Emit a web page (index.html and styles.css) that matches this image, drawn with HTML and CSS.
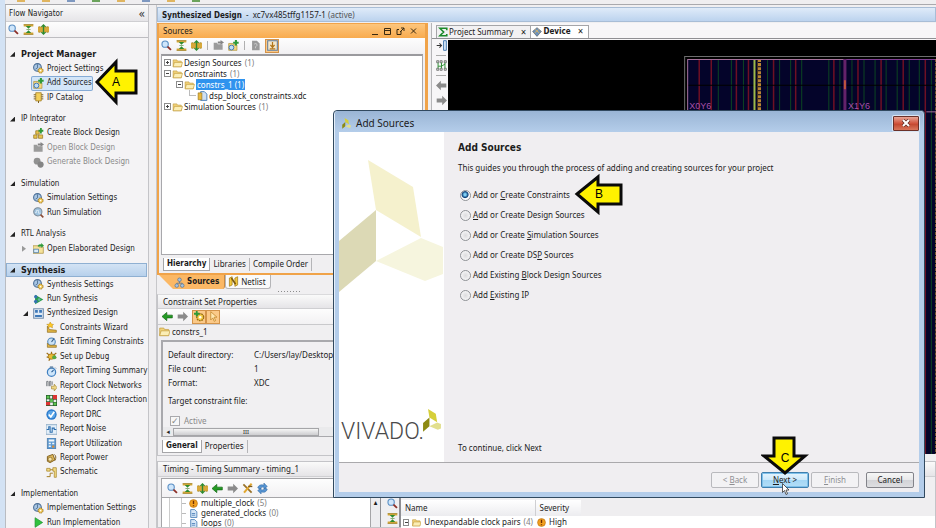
FILE: index.html
```html
<!DOCTYPE html>
<html lang="en">
<head>
<meta charset="utf-8">
<title>Vivado - Add Sources</title>
<link rel="stylesheet" href="styles.css">
</head>
<body>
<svg class="defs" aria-hidden="true">
  <symbol id="search" viewBox="0 0 16 16"><circle cx="6" cy="6" r="4.6" fill="#cfe6fb" stroke="#5a8fc4" stroke-width="1.6"/><path d="M9.5 9.5l5 5" stroke="#8c2f28" stroke-width="2.6"/></symbol>
  <symbol id="collapse" viewBox="0 0 16 16"><path d="M1 2h14M1 14h14" stroke="#d8a93a" stroke-width="3"/><path d="M1 1h14M1 15h14" stroke="#8f7a2c"/><path d="M8 7L4 3h8zM8 9l-4 4h8z" fill="#2d8a2d"/><path d="M5 8h6" stroke="#5b8f3d"/></symbol>
  <symbol id="expand" viewBox="0 0 16 16"><path d="M0 4h16v8H0z" fill="#d8a93a"/><path d="M1 4h14M1 12h14" stroke="#8f7a2c" stroke-dasharray="2 1"/><path d="M8 0l4 4H4zM8 16l4-4H4z" fill="#2d8a2d"/><path d="M8 3v10" stroke="#2d8a2d" stroke-width="2"/></symbol>
  <symbol id="gear" viewBox="0 0 16 16"><circle cx="6.5" cy="6.5" r="5.6" fill="#a9c6e4" stroke="#4c6f96" stroke-width="1.6"/><path d="M6.500 2v5l-3 2" fill="none" stroke="#35567b"/><circle cx="11" cy="11" r="3.6" fill="#f3cb57" stroke="#9a6d12" stroke-width="1.4" stroke-dasharray="2 .8"/><circle cx="11" cy="11" r="1.200" fill="#fff"/></symbol>
  <symbol id="addsrc" viewBox="0 0 16 16"><path d="M1 5h6l1 2h5v8H1z" fill="#f2d77e" stroke="#b18f32"/><circle cx="5" cy="11" r="3.500" fill="#bcdcf6" stroke="#3f77b5" stroke-width="1.400"/><path d="M11.500 0v8M7.500 4h8" stroke="#2f9a38" stroke-width="3"/></symbol>
  <symbol id="chip" viewBox="0 0 16 16"><path d="M4 1h8v12H4z" fill="#f3cf5a" stroke="#987118"/><path d="M1 4h3M1 7h3M1 10h3M12 4h3M12 7h3M12 10h3M8 13v3" stroke="#7a5c18" stroke-width="1.400"/></symbol>
  <symbol id="blocks" viewBox="0 0 16 16"><path d="M1 10h5v5H1zM8 10h6v5H8zM4 4h5v5H4z" fill="#e8c44e" stroke="#92701c"/><path d="M11.500 0v8M8 4h7" stroke="#2f9a38" stroke-width="2.600"/></symbol>
  <symbol id="openoff" viewBox="0 0 16 16"><path d="M1 4h5l1 2h7v8H1z" fill="#9b9b9b"/><path d="M7 5V2h4V0l5 3.500L11 7V5z" fill="#858585"/></symbol>
  <symbol id="genoff" viewBox="0 0 16 16"><circle cx="6" cy="6" r="5" fill="#919191"/><circle cx="11" cy="11" r="4.500" fill="#858585"/></symbol>
  <symbol id="sim" viewBox="0 0 16 16"><circle cx="7" cy="7" r="6" fill="#9fc3df" stroke="#7b8b99" stroke-width="1.500"/><path d="M3 8h2V5h3v4h3" fill="none" stroke="#e9f5fc"/><path d="M11 11l4 4" stroke="#8a4a35" stroke-width="2.400"/></symbol>
  <symbol id="elab" viewBox="0 0 16 16"><path d="M0 4h8l1 2h6v9H0z" fill="#f5e29a" stroke="#a88b36"/><path d="M1 9h7v5H1z" fill="#d9ebf9" stroke="#376da5"/><path d="M7 4q1-3 5-2V0l4 4-4 3V5H7z" fill="#2f9a38"/></symbol>
  <symbol id="runs" viewBox="0 0 16 16"><path d="M3 1l12 7-12 7z" fill="#2a9d4a"/><circle cx="4" cy="4" r="2.400" fill="#3472b0"/><circle cx="4" cy="11" r="2.600" fill="#3472b0"/><circle cx="9" cy="8" r="2" fill="#62b9a0"/></symbol>
  <symbol id="run" viewBox="0 0 16 16"><path d="M3 1l11 7-11 7z" fill="#2fc23f" stroke="#1c8f2b"/></symbol>
  <symbol id="design" viewBox="0 0 16 16"><path d="M1 1h14v14H1z" fill="#dfeaf6" stroke="#7790ad" stroke-width="1.600"/><path d="M3 3h4v4H3zM9 3h4v4H9zM3 10h10v3H3z" fill="#3e78b8"/></symbol>
  <symbol id="wizard" viewBox="0 0 16 16"><path d="M2 6l3 5 10 1v3H2z" fill="#e1b544" stroke="#8d6b1d"/><path d="M6 0l2 3 3 .5-2 2 .5 3L6 7 3 8.500 3.500 5 1 3.500 5 3z" fill="#ffc928" stroke="#a97908" stroke-width=".6"/></symbol>
  <symbol id="edit" viewBox="0 0 16 16"><circle cx="8" cy="7" r="5.500" fill="#cae1f5" stroke="#4a82ba" stroke-width="1.500"/><path d="M2 15V9l3 3h10v3z" fill="#e1b544" stroke="#8d6b1d"/><path d="M8 7l4-5" stroke="#385f8b" stroke-width="1.500"/></symbol>
  <symbol id="bug" viewBox="0 0 16 16"><path d="M1 3l4 3M8 1v4M15 3l-4 3M1 9h4M15 10l-4-1M4 14l2-3" stroke="#9b6b15" stroke-width="1.800"/><ellipse cx="8" cy="8" rx="5" ry="4" fill="#e9b934" stroke="#936911"/><circle cx="12" cy="9" r="3" fill="#56a941"/></symbol>
  <symbol id="watch" viewBox="0 0 16 16"><circle cx="8" cy="9" r="6" fill="#cfe6fb" stroke="#3f7fc0" stroke-width="1.800"/><path d="M6 1h4v2H6zM13 2l2 2" fill="#6b8aab" stroke="#6b8aab"/><path d="M8 9l3-3" stroke="#285b92" stroke-width="1.600"/></symbol>
  <symbol id="clknet" viewBox="0 0 16 16"><path d="M1 9V2h2v7M5 9V2h2v7M9 7V2" fill="none" stroke="#73777d" stroke-width="1.300"/><path d="M8 9h4V6l4 5-4 5v-3H8z" fill="#f0d684" stroke="#a58a3c"/></symbol>
  <symbol id="matrix" viewBox="0 0 16 16"><path d="M0 0h16v16H0z" fill="#245c2b"/><path d="M10 0h6v6h-6zM0 10h6v5H0z" fill="#d33"/><path d="M1 1h4v4H1zM11 11h4v4h-4zM6 6h4v4H6z" fill="#5fc552"/><path d="M6 1h3v4H6zM1 6h4v3H1zM6 11h4v4H6zM11 7h4v3h-4z" fill="#eee"/></symbol>
  <symbol id="drc" viewBox="0 0 16 16"><circle cx="8" cy="8" r="7.500" fill="#2b79cb"/><circle cx="8" cy="8" r="5.500" fill="#5aa5e8"/><path d="M4 8l3 3.500L12 4" fill="none" stroke="#fff" stroke-width="2.400"/></symbol>
  <symbol id="noise" viewBox="0 0 16 16"><path d="M0 1h16v14H0z" fill="#e3eef8" stroke="#6d91b5"/><path d="M1 8h3V4h2v8h3V6h3v2h3" fill="none" stroke="#2c6dad" stroke-width="1.500"/></symbol>
  <symbol id="util" viewBox="0 0 16 16"><path d="M2 0h12v16H2z" fill="#5f9bd3" stroke="#3c6e9f"/><path d="M4 2h8v3H4zM4 7h3v2H4zM9 7h3v2H9zM4 11h3v2H4z" fill="#f2f7fb"/><path d="M9 11h3v3H9z" fill="#e28a2c"/></symbol>
  <symbol id="power" viewBox="0 0 16 16"><path d="M2 5l8-3 3 8-7 4-4-2z" fill="#ddb75a" stroke="#80601f" stroke-width="1.400"/><circle cx="6" cy="9" r="3" fill="#f5e2a8" stroke="#80601f"/><path d="M12 2q4 3 1 9" stroke="#80601f" fill="none" stroke-width="1.400"/></symbol>
  <symbol id="schem" viewBox="0 0 16 16"><path d="M1 2h5v4H1zM10 1h5v14h-3V6h-2z" fill="#f3dc86" stroke="#a27d20"/><path d="M1 14h5V9h4M6 4h4" fill="none" stroke="#a27d20" stroke-width="1.400"/></symbol>
  <symbol id="folder" viewBox="0 0 16 16"><path d="M1 3h6l1 2h6v9H1z" fill="#f1d27a" stroke="#c09a3a"/><path d="M3 7h13l-2 7H1z" fill="#fbeeb5" stroke="#c09a3a"/></symbol>
  <symbol id="file" viewBox="0 0 16 16"><path d="M3 1h7l4 4v10H3z" fill="#d7e7f7" stroke="#4a7fb8" stroke-width="1.500"/><path d="M5 8h6M5 11h6" stroke="#4a7fb8" stroke-width="1.500"/></symbol>
  <symbol id="xdc" viewBox="0 0 16 16"><path d="M5 1h6l4 4v10H5z" fill="#cfe0f2" stroke="#4a7fb8" stroke-width="1.500"/><path d="M1 3h6v11H1z" fill="#e9b93c" stroke="#94711c"/></symbol>
  <symbol id="page" viewBox="0 0 16 16"><path d="M3 1h7l4 4v10H3z" fill="#9a9a9a"/><path d="M6 6q3-2 4 0t-2 4v2" fill="none" stroke="#ddd"/></symbol>
  <symbol id="target" viewBox="0 0 16 16"><path d="M1 1h14v14H1z" fill="#f4e6c9" stroke="#5d7da1" stroke-width="1.500"/><path d="M8 3v7M5 7l3 4 3-4M4 13h8" fill="none" stroke="#b1761a" stroke-width="1.800"/></symbol>
  <symbol id="left" viewBox="0 0 16 16"><path d="M0 8l7-6v4h8v4H7v4z" fill="#239b23" stroke="#146814"/></symbol>
  <symbol id="leftoff" viewBox="0 0 16 16"><path d="M0 8l7-7v4h8v6H7v4z" fill="#8b8b8b"/></symbol>
  <symbol id="rightoff" viewBox="0 0 16 16"><path d="M16 8L9 1v4H1v6h8v4z" fill="#8b8b8b"/></symbol>
  <symbol id="gearplus" viewBox="0 0 16 16"><circle cx="9" cy="9" r="5" fill="#f5d04b" stroke="#9a6d12" stroke-width="2" stroke-dasharray="2.500 1"/><circle cx="9" cy="9" r="1.800" fill="#fff"/><path d="M4 0v8M0 4h8" stroke="#2f9a38" stroke-width="2.600"/></symbol>
  <symbol id="pointer" viewBox="0 0 16 16"><path d="M4 1v12l3-3 2 5 2-1-2-5h4z" fill="#ffe6b0" stroke="#b97b1a"/></symbol>
  <symbol id="hier" viewBox="0 0 16 16"><path d="M8 6v3M4 11V9h8v2" fill="none" stroke="#657a91" stroke-width="1.300"/><circle cx="8" cy="4" r="2.600" fill="#a6c3e2" stroke="#56718f"/><circle cx="4" cy="12.500" r="2.600" fill="#a6c3e2" stroke="#56718f"/><circle cx="12" cy="12.500" r="2.600" fill="#a6c3e2" stroke="#56718f"/></symbol>
  <symbol id="net" viewBox="0 0 16 16"><path d="M2 3l4-2v12l-4 2zM10 3l4-2v12l-4 2z" fill="#f3c83a" stroke="#9b7419"/><path d="M5 3l6 9" fill="none" stroke="#7b5a10" stroke-width="2.400"/></symbol>
  <symbol id="warn" viewBox="0 0 16 16"><circle cx="8" cy="8" r="7" fill="#f2a01f" stroke="#b56a08"/><path d="M8 3v6M8 11v2" stroke="#6d2d00" stroke-width="2.400"/></symbol>
  <symbol id="tools" viewBox="0 0 16 16"><path d="M2 2l12 12" stroke="#99722a" stroke-width="2.600"/><path d="M14 1L3 14" stroke="#e2a72f" stroke-width="3"/><path d="M9 5h6" stroke="#7b5a22" stroke-width="2"/></symbol>
  <symbol id="refresh" viewBox="0 0 16 16"><path d="M1 7q2-6 9-4V0l5 5-5 4V6Q5 5 4 9zM15 9q-2 6-9 4v3l-5-5 5-4v3q5 1 6-3z" fill="#5694d2" stroke="#2b629d" stroke-width=".7"/></symbol>
  <symbol id="sigma" viewBox="0 0 16 16"><path d="M14 5V2H3l6 6-6 6h11v-3" fill="none" stroke="#1c8a2a" stroke-width="2.600"/></symbol>
  <symbol id="device" viewBox="0 0 16 16"><path d="M8 1l7 6-7 8-7-8z" fill="#6d92bb" stroke="#5a5a5a"/><path d="M5 4l7 6M10 4l-6 6" stroke="#d7b263" stroke-width="1.500"/></symbol>
  <symbol id="dock" viewBox="0 0 16 16"><path d="M1 8h7M5 5l3 3-3 3" fill="none" stroke="#333" stroke-width="1.500"/><path d="M11 1h4v14h-4z" fill="#d8e8f8" stroke="#477bb0" stroke-width="1.400"/></symbol>
  <symbol id="route" viewBox="0 0 16 16"><path d="M1 1h3v3H1zM6 1h3v3H6zM12 1h3v3h-3zM1 12h3v3H1zM6 12h3v3H6zM12 12h3v3h-3z" fill="#ddd" stroke="#555"/><path d="M3 4v8M8 4v8M13 4v8M3 9h5l5-3" stroke="#2f8f35" fill="none" stroke-width="1.400"/></symbol>
  <symbol id="vivado" viewBox="0 0 104 134"><path d="M29 0l45 27 8 50-45-27z" fill="#d6cf3a"/><path d="M37 50v51L0 132V81z" fill="#8d8a12"/><path d="M37 101l45-23 22 9v27l-18 7z" fill="#e2df8e"/></symbol>
</svg>

<div class="app">
  <div class="toolstrip" aria-hidden="true"><i></i><i></i><i></i><i></i><i></i><i></i><i></i><i></i></div>

  <div class="workspace">
    <nav class="navigator" aria-label="Flow Navigator">
      <header class="nav-head"><span>Flow Navigator</span><button class="plain" aria-label="Collapse navigator">«</button></header>
      <div class="tools nav-tools">
        <svg><use href="#search"/></svg><svg><use href="#collapse"/></svg><svg><use href="#expand"/></svg>
      </div>
      <ul class="nav-list">
        <li class="head first strong">Project Manager</li>
        <li class="item"><a href="#"><svg><use href="#gear"/></svg>Project Settings</a></li>
        <li class="item"><a href="#" class="picked"><svg><use href="#addsrc"/></svg>Add Sources</a></li>
        <li class="item"><a href="#"><svg><use href="#chip"/></svg>IP Catalog</a></li>
        <li class="head">IP Integrator</li>
        <li class="item"><a href="#"><svg><use href="#blocks"/></svg>Create Block Design</a></li>
        <li class="item off"><a href="#"><svg><use href="#openoff"/></svg>Open Block Design</a></li>
        <li class="item off"><a href="#"><svg><use href="#genoff"/></svg>Generate Block Design</a></li>
        <li class="head">Simulation</li>
        <li class="item"><a href="#"><svg><use href="#gear"/></svg>Simulation Settings</a></li>
        <li class="item"><a href="#"><svg><use href="#sim"/></svg>Run Simulation</a></li>
        <li class="head">RTL Analysis</li>
        <li class="item closed"><a href="#"><svg><use href="#elab"/></svg>Open Elaborated Design</a></li>
        <li class="head strong current">Synthesis</li>
        <li class="item"><a href="#"><svg><use href="#gear"/></svg>Synthesis Settings</a></li>
        <li class="item"><a href="#"><svg><use href="#runs"/></svg>Run Synthesis</a></li>
        <li class="item open"><a href="#"><svg><use href="#design"/></svg>Synthesized Design</a></li>
        <li class="item sub"><a href="#"><svg><use href="#wizard"/></svg>Constraints Wizard</a></li>
        <li class="item sub"><a href="#"><svg><use href="#edit"/></svg>Edit Timing Constraints</a></li>
        <li class="item sub"><a href="#"><svg><use href="#bug"/></svg>Set up Debug</a></li>
        <li class="item sub"><a href="#"><svg><use href="#watch"/></svg>Report Timing Summary</a></li>
        <li class="item sub"><a href="#"><svg><use href="#clknet"/></svg>Report Clock Networks</a></li>
        <li class="item sub"><a href="#"><svg><use href="#matrix"/></svg>Report Clock Interaction</a></li>
        <li class="item sub"><a href="#"><svg><use href="#drc"/></svg>Report DRC</a></li>
        <li class="item sub"><a href="#"><svg><use href="#noise"/></svg>Report Noise</a></li>
        <li class="item sub"><a href="#"><svg><use href="#util"/></svg>Report Utilization</a></li>
        <li class="item sub"><a href="#"><svg><use href="#power"/></svg>Report Power</a></li>
        <li class="item sub"><a href="#"><svg><use href="#schem"/></svg>Schematic</a></li>
        <li class="head">Implementation</li>
        <li class="item"><a href="#"><svg><use href="#gear"/></svg>Implementation Settings</a></li>
        <li class="item"><a href="#"><svg><use href="#run"/></svg>Run Implementation</a></li>
      </ul>
    </nav>
    <div class="splitter" aria-hidden="true"></div>

    <main class="main">
      <h1 class="design-bar"><b>Synthesized Design</b> - &nbsp;xc7vx485tffg1157-1 <em>(active)</em></h1>
      <div class="upper">
        <div class="left-stack">
          <section class="sources">
            <header class="orange-head"><span>Sources</span>
              <svg class="win-ctl" viewBox="0 0 46 9"><path d="M1 7.500h6M13.500 1.500h6v6h-6zM13.500 3.500h6M30 4v3.500h-4v-5h2M29 5l4-4M30 1h3v3M40 1.500l5 5M45 1.500l-5 5" fill="none" stroke="#3a2a10"/></svg>
            </header>
            <div class="tools">
              <svg><use href="#search"/></svg><svg><use href="#collapse"/></svg><svg><use href="#expand"/></svg><hr><svg><use href="#openoff"/></svg><svg><use href="#addsrc"/></svg><hr><svg><use href="#page"/></svg><span class="toggle"><svg><use href="#target"/></svg></span>
            </div>
            <ul class="tree">
              <li><i class="box plus"></i><svg><use href="#folder"/></svg>Design Sources <small>(1)</small></li>
              <li><i class="box"></i><svg><use href="#folder"/></svg>Constraints <small>(1)</small></li>
              <li class="d1"><i class="box"></i><svg><use href="#folder"/></svg><mark>constrs_1 (1)</mark></li>
              <li class="d2"><i class="twig"></i><svg><use href="#xdc"/></svg>dsp_block_constraints.xdc</li>
              <li><i class="box plus"></i><svg><use href="#folder"/></svg>Simulation Sources <small>(1)</small></li>
            </ul>
            <div class="subtabs"><button class="on">Hierarchy</button><button>Libraries</button><button>Compile Order</button></div>
          </section>
          <div class="viewtabs"><button class="on"><svg><use href="#hier"/></svg>Sources</button><button><svg><use href="#net"/></svg>Netlist</button></div>
          <div class="grip" aria-hidden="true"></div>
          <section class="props">
            <header class="gray-head">Constraint Set Properties</header>
            <div class="tools"><svg><use href="#left"/></svg><svg><use href="#rightoff"/></svg><span class="pair"><span class="toggle"><svg><use href="#gearplus"/></svg></span><span class="toggle"><svg><use href="#pointer"/></svg></span></span></div>
            <div class="props-name"><svg><use href="#folder"/></svg>constrs_1</div>
            <div class="props-body">
              <dl>
                <dt>Default directory:</dt><dd>C:/Users/lay/Desktop</dd>
                <dt>File count:</dt><dd>1</dd>
                <dt>Format:</dt><dd>XDC</dd>
                <dt class="wide">Target constraint file:</dt>
              </dl>
              <label class="active"><input type="checkbox" checked disabled>Active</label>
              <div class="hscroll" aria-hidden="true"><span>◂</span><i>III</i></div>
            </div>
            <div class="subtabs"><button class="on">General</button><button>Properties</button></div>
          </section>
        </div>

        <section class="device">
          <div class="doc-tabs">
            <button><svg><use href="#sigma"/></svg>Project Summary<span>✕</span></button><button class="on"><svg><use href="#device"/></svg>Device<span>✕</span></button>
          </div>
          <div class="device-body">
            <div class="side-tools"><svg><use href="#dock"/></svg><hr><svg><use href="#route"/></svg><hr><svg><use href="#leftoff"/></svg><svg><use href="#rightoff"/></svg><hr></div>
            <div class="die">
              <svg class="die-art" viewBox="0 0 488 412" preserveAspectRatio="xMinYMin slice">
                <path d="M235.500 412V16.500H488" fill="none" stroke="#6d6d6d"/>
                <path d="M238 19h250v393H238z" fill="#04042a"/>
                <path d="M250 19v393M262 19v393M287 19v393M299 19v393M324 19v393M346 19v393M384 19v393M408 19v393M431 19v393M453 19v393M475 19v393" stroke="#6e1024" stroke-width="1.500"/>
                <path d="M269 19v393M282 19v393M294 19v393M318 19v393M330 19v393M341 19v393M352 19v393M379 19v393M390 19v393M402 19v393M414 19v393M425 19v393M436 19v393M447 19v393M459 19v393M469 19v393M481 19v393" stroke="#0c4522"/>
                <path d="M238 45h250" stroke="#000"/>
                <path d="M305 19v393" stroke="#9cb84a" stroke-width="2"/>
                <path d="M310 19v393" stroke="#b98534" stroke-width="3" stroke-dasharray="3 1"/>
                <path d="M308 19v393" stroke="#4a3516"/>
                <path d="M238.500 412V19.500H394" fill="none" stroke="#a5719a"/>
                <path d="M394 19.500h94" stroke="#7d3d91"/>
                <path d="M395 19v393" stroke="#63226a" stroke-width="3"/>
                <path d="M395 40v9" stroke="#c0563e" stroke-width="2"/>
                <path d="M486 19v393" stroke="#b98534" stroke-width="2" stroke-dasharray="3 1"/>
                <path d="M476 71.500h12" stroke="#a5719a"/>
                <text x="240" y="69">X0Y6</text><text x="398" y="69">X1Y6</text>
              </svg>
            </div>
          </div>
        </section>
      </div>

      <section class="timing">
        <header class="gray-head">Timing - Timing Summary - timing_1</header>
        <div class="timing-body">
          <div class="timing-left">
            <div class="tools"><svg><use href="#search"/></svg><svg><use href="#collapse"/></svg><svg><use href="#expand"/></svg><svg><use href="#left"/></svg><svg><use href="#rightoff"/></svg><svg><use href="#tools"/></svg><svg><use href="#refresh"/></svg></div>
            <ul class="checks">
              <li><svg><use href="#warn"/></svg>multiple_clock <small>(5)</small></li>
              <li><svg><use href="#file"/></svg>generated_clocks <small>(0)</small></li>
              <li><svg><use href="#file"/></svg>loops <small>(0)</small></li>
            </ul>
          </div>
          <div class="vscroll" aria-hidden="true">▴</div>
          <div class="vtools"><svg><use href="#search"/></svg><svg><use href="#collapse"/></svg></div>
          <div class="result">
            <table>
              <thead><tr><th class="name">Name</th><th class="sev">Severity</th><th></th></tr></thead>
              <tbody><tr><td><span class="cell"><i class="box"></i><svg><use href="#folder"/></svg>Unexpandable clock pairs <small>(4)</small></span></td><td><span class="cell"><svg><use href="#warn"/></svg>High</span></td><td></td></tr></tbody>
            </table>
          </div>
        </div>
      </section>
    </main>
  </div>
</div>

<div class="dialog" role="dialog" aria-labelledby="dlg-title">
  <header class="dlg-head"><svg><use href="#vivado"/></svg><span id="dlg-title">Add Sources</span>
    <button class="close" aria-label="Close"><svg viewBox="0 0 10 8"><path d="M2 1l6 6M8 1L2 7" stroke="#5b2a22" stroke-width="3.400"/><path d="M2 1l6 6M8 1L2 7" stroke="#fff" stroke-width="2"/></svg></button>
  </header>
  <form class="dlg-body">
    <div class="dlg-main">
      <div class="brand">
        <svg class="brand-art" viewBox="0 0 104 134"><path d="M29 0l45 27 8 50-45-27z" fill="#f5f1cd"/><path d="M37 50v51L0 132V81z" fill="#dcd9b5"/><path d="M37 101l45-23 22 9v27l-18 7z" fill="#f6f5de"/></svg>
        <div class="wordmark"><span>VIVADO.</span><svg><use href="#vivado"/></svg></div>
      </div>
      <div class="choices">
        <h2>Add Sources</h2>
        <p>This guides you through the process of adding and creating sources for your project</p>
        <label><input type="radio" name="kind" checked>Add or <u>C</u>reate Constraints</label>
        <label><input type="radio" name="kind"><u>A</u>dd or Create Design Sources</label>
        <label><input type="radio" name="kind">Add or Create <u>S</u>imulation Sources</label>
        <label><input type="radio" name="kind">Add or Create DS<u>P</u> Sources</label>
        <label><input type="radio" name="kind">Add Existing <u>B</u>lock Design Sources</label>
        <label><input type="radio" name="kind">Add <u>E</u>xisting IP</label>
        <p class="hint">To continue, click Next</p>
      </div>
    </div>
    <footer class="dlg-foot">
      <button type="button" disabled>&lt; <u>B</u>ack</button><button type="button" class="go"><u>N</u>ext &gt;</button><button type="button" disabled><u>F</u>inish</button><button type="button" class="cancel">Cancel</button>
    </footer>
  </form>
</div>

<svg class="callout a" viewBox="0 0 46 48"><path d="M3 24L22 4v9h20v22H22v9z"/><text x="22" y="28">A</text></svg>
<svg class="callout b" viewBox="0 0 50 42"><path d="M3 21L24 4v8h23v19H24v8z"/><text x="25" y="25">B</text></svg>
<svg class="callout c" viewBox="0 0 48 40"><path d="M13 2h20v18h11L24 37 3 20h10z"/><text x="24" y="26">C</text></svg>
<svg class="cursor" viewBox="0 0 8 12"><path d="M.5.5v9l2-2 1.500 4 1.500-.7L4 7h3z" fill="#fff" stroke="#333" stroke-width=".8"/></svg>
</body>
</html>
```

FILE: styles.css
```css
* { box-sizing: border-box; }
html, body { height: 100%; }
body {
  margin: 0;
  overflow: hidden;
  position: relative;
  background: #f0eff1;
  color: #1c1c1c;
  font: 8px/12px "Noto Sans", "DejaVu Sans Condensed", sans-serif;
}
ul, dl, dd, p, h1, h2 { margin: 0; padding: 0; list-style: none; }
a { color: inherit; text-decoration: none; }
button { font: inherit; color: inherit; background: none; border: 0; padding: 0; margin: 0; }
small { font-size: inherit; color: #808080; }
svg { width: 11px; height: 11px; flex: none; display: block; }
.defs { position: absolute; width: 0; height: 0; }

.app { height: 100%; display: flex; flex-direction: column; border-left: 5px solid #d3e2f4; }
.toolstrip { height: 5px; flex: none; display: flex; gap: 17px; padding-left: 12px; border-bottom: 1px solid #a9a9ad; background: #efeef0; }
.toolstrip i { width: 8px; height: 2px; background: #e0b560; }
.toolstrip i:nth-child(3n) { background: #7e98c0; }
.toolstrip i:nth-child(4n) { background: #6ba35c; }
.workspace { flex: 1; min-height: 0; display: flex; }
.navigator, .design-bar b, .on { font-family: "DejaVu Sans Condensed", sans-serif; }
.strong, .on { font-weight: bold; }

/* flow navigator */
.navigator { width: 144px; flex: none; display: flex; flex-direction: column; min-height: 0; overflow: hidden; background: #f4f3f5; border-left: 1px solid #b9bcc2; border-right: 1px solid #c4c4c8; }
.nav-head { display: flex; justify-content: space-between; align-items: center; height: 17px; padding: 2px 3px 0; background: linear-gradient(#fafafa, #e6e5e8); border-bottom: 1px solid #cfcfd2; }
.nav-head .plain { font-size: 12px; color: #333; }
.tools { display: flex; align-items: center; gap: 4px; height: 16px; padding: 0 2px; background: linear-gradient(#fdfdfd, #f2f1f3); }
.tools hr { width: 1px; height: 9px; border: 0; margin: 0 1px; background: #b0b0b0; }
.nav-tools { border-bottom: 1px solid #bdbdc1; }
.nav-list { flex: 1; min-height: 0; display: flex; flex-direction: column; padding-top: 9px; margin-bottom: -2px; }
.nav-list li { flex: 1 1 0; min-height: 0; display: flex; align-items: center; white-space: nowrap; }
.nav-list .head { margin-top: 7px; gap: 6px; padding-left: 4px; }
.nav-list .first { margin-top: 0; }
.head::before, .open::before { content: ""; width: 5px; height: 5px; background: #222; clip-path: polygon(100% 0, 100% 100%, 0 100%); }
.nav-list .strong { font-size: 9px; }
.nav-list .current { background: linear-gradient(#d6e5f5, #b5cfeb); box-shadow: inset 0 0 0 1px #8fb0d2; margin-right: 1px; }
.item { padding-left: 26px; }
.item.sub { padding-left: 39px; }
.item.open { padding-left: 17px; gap: 4px; }
.item.closed { padding-left: 16px; gap: 6px; }
.closed::before { content: ""; width: 4px; height: 6px; background: #999; clip-path: polygon(0 0, 100% 50%, 0 100%); }
.item a { display: flex; align-items: center; gap: 3px; height: 13px; padding-left: 1px; }
.item.off { color: #8a8a8a; }
.picked { background: #d3e5f8; box-shadow: 0 0 0 1px #85abd6; border-radius: 1px; }
.splitter { width: 8px; flex: none; background: #efeef0; border-right: 1px solid #c7c7ca; }

/* main area */
.main { flex: 1; min-width: 0; display: flex; flex-direction: column; }
.design-bar { height: 15px; flex: none; margin-top: 2px; padding-left: 4px; font-size: 8px; line-height: 13px; font-weight: normal; background: linear-gradient(#dfebf9, #bcd3ee); border: 1px solid #a8bdd6; }
.design-bar b { padding-right: 2px; }
.design-bar em { font-style: normal; color: #555; }
.upper { height: 432px; flex: none; display: flex; gap: 3px; padding-top: 1px; }
.left-stack { width: 271px; flex: none; display: flex; flex-direction: column; }
.sources { border: 2px solid #f0a349; border-right-width: 3px; border-top-width: 1px; flex: none; display: flex; flex-direction: column; height: 252px; }
.orange-head { display: flex; align-items: center; justify-content: space-between; height: 14px; padding: 0 8px 0 4px; background: linear-gradient(#fdc67d, #f8ab4e); }
.orange-head .win-ctl { width: 46px; height: 9px; }
.sources .tools { height: 15px; }
.toggle { display: flex; align-items: center; justify-content: center; width: 14px; height: 14px; background: #fbc988; border: 1px solid #d3934a; }
.tree { flex: 1; margin: 1px 2px 0; padding-top: 1px; background: #fff; border: 1px solid #a8a8ac; border-top: 2px solid #9a9a9e; }
.tree li { display: flex; align-items: center; gap: 1px; height: 11px; padding-left: 2px; white-space: pre; }
.tree svg { width: 11px; height: 10px; }
.tree .d1 { padding-left: 14px; }
.tree .d2 { padding-left: 27px; }
.tree mark { background: #2f93ee; color: #fff; line-height: 11px; padding: 0 1px; }
.box { width: 7px; height: 7px; border: 1px solid #8d8d8d; background: linear-gradient(#444, #444) center / 3px 1px no-repeat, #fff; }
.box.plus { background: linear-gradient(#444, #444) center / 3px 1px no-repeat, linear-gradient(#444, #444) center / 1px 3px no-repeat, #fff; }
.twig { width: 7px; height: 6px; border-left: 1px solid #bbb; border-bottom: 1px solid #bbb; margin-bottom: 5px; }
.subtabs { display: flex; align-items: center; height: 18px; flex: none; padding-left: 4px; }
.subtabs button { height: 13px; padding: 0 3px; border-right: 1px solid #b5b5b8; }
.subtabs .on { background: #fff; border: 1px solid #a5a5a8; border-top: 0; }
.viewtabs { display: flex; height: 14px; flex: none; padding-left: 2px; }
.viewtabs button { display: flex; align-items: center; gap: 2px; padding: 0 4px 0 2px; background: #fafafa; border: 1px solid #b5b5b8; border-top: 0; border-radius: 0 0 3px 3px; }
.viewtabs .on { padding: 0 5px 0 15px; background: #fbb865; border: 0; border-right: 1px solid #c98a42; clip-path: polygon(0 0, 100% 0, 100% 100%, 14px 100%); }
.grip { width: 24px; height: 2px; flex: none; margin: 1px 0 2px 121px; background: repeating-linear-gradient(90deg, #8d8d8d 0 1px, transparent 1px 3px) 0 50% / 100% 1px no-repeat; }
.gray-head { height: 15px; line-height: 14px; padding-left: 5px; background: linear-gradient(#fafafa, #e5e4e7); border-bottom: 1px solid #cfcfd2; }
.props { flex: 1; display: flex; flex-direction: column; border: 1px solid #c4c4c8; border-top-color: #dadadc; }
.props .gray-head { height: 14px; }
.props .tools { padding-left: 4px; border-bottom: 1px solid #c9c9cc; }
.pair { display: flex; }
.props-name { display: flex; align-items: center; gap: 2px; height: 13px; padding-left: 1px; }
.props-body { flex: 1; margin: 2px 0 0 3px; border: 2px solid #a9a9ad; border-right: 0; border-bottom-width: 1px; background: #f1f0f2; display: flex; flex-direction: column; }
.props-body dl { display: grid; grid-template-columns: 86px 1fr; padding: 6px 0 0 5px; line-height: 14px; white-space: nowrap; }
.wide { grid-column: 1 / 3; margin-top: 4px; }
.active { display: flex; align-items: center; gap: 4px; margin: 7px 0 0 7px; color: #8a8a8a; }
.active input { appearance: none; width: 10px; height: 10px; margin: 0; border: 1px solid #a9a9ad; background: #f7f7f7; display: grid; place-items: center; }
.active input::after { content: "✓"; font-size: 9px; line-height: 8px; color: #888; }
.hscroll { display: flex; align-items: center; height: 9px; margin-top: auto; background: #eaeaec; }
.hscroll span { width: 10px; text-align: center; font-size: 7px; line-height: 8px; }
.hscroll i { width: 146px; height: 8px; border: 1px solid #a5a5a8; background: linear-gradient(#f5f5f5, #cdcdd0); font-style: normal; font-size: 6px; line-height: 6px; text-align: center; }

/* device view */
.device { flex: 1; min-width: 0; display: flex; flex-direction: column; border-left: 1px solid #b5b5b8; background: #f7f6f8; }
.doc-tabs { display: flex; align-items: flex-end; height: 16px; flex: none; padding-left: 4px; border-bottom: 1px solid #8f8f93; }
.doc-tabs button { display: flex; align-items: center; gap: 1px; height: 13px; padding: 0 4px 0 1px; border: 1px solid #a5a5a8; border-bottom: 0; background: #f2f1f3; }
.doc-tabs .on { background: #fff; border-left: 0; }
.doc-tabs svg { width: 10px; height: 10px; }
.doc-tabs span { font-weight: bold; margin-left: 6px; }
.device-body { flex: 1; min-height: 0; display: flex; margin-top: 1px; }
.side-tools { width: 16px; flex: none; display: flex; flex-direction: column; align-items: center; gap: 4px; padding-left: 2px; }
.side-tools hr { width: 10px; height: 1px; border: 0; margin: 0; background: #aaa; }
.die { flex: 1; min-width: 0; background: #000; overflow: hidden; }
.die-art { width: 100%; height: 100%; }
.die-art text { font: 9px "Liberation Sans", sans-serif; fill: #a64fa8; }

/* timing results */
.timing { flex: 1; min-height: 0; display: flex; flex-direction: column; margin-top: 7px; border: 1px solid #c4c4c8; }
.timing-body { flex: 1; min-height: 0; display: flex; margin-top: 1px; }
.timing-left { width: 210px; flex: none; margin-left: 3px; border: 1px solid #a5a5a8; border-bottom: 0; background: #fff; overflow: hidden; }
.timing-left .tools { height: 19px; padding-left: 5px; border-bottom: 1px solid #a5a5a8; }
.checks { padding-left: 20px; background: linear-gradient(#ccc, #ccc) 7px 0 / 1px 100% no-repeat, linear-gradient(#ccc, #ccc) 19px 0 / 1px 100% no-repeat; }
.checks li { display: flex; align-items: center; gap: 3px; height: 10px; line-height: 10px; white-space: nowrap; }
.checks li::before { content: ""; width: 4px; height: 1px; background: #bbb; }
.checks svg { width: 9px; height: 9px; }
.vscroll { width: 10px; flex: none; padding-top: 18px; text-align: center; background: #ededf0; border-right: 1px solid #8f8f93; }
.vtools { width: 20px; flex: none; display: flex; flex-direction: column; gap: 4px; padding: 20px 0 0 6px; border-right: 2px solid #8f8f93; }
.result { flex: 1; min-width: 0; padding-top: 22px; }
.result table { width: 100%; border-collapse: collapse; table-layout: fixed; background: #fff; }
.result th { height: 16px; padding: 0 4px; text-align: left; font-weight: normal; background: #efeef0; }
.result .name { width: 134px; background: linear-gradient(#fff, #ececef); border-right: 1px solid #cfcfd2; }
.result .sev { width: 46px; background: linear-gradient(#fff, #ececef); }
.result td { height: 12px; padding: 0 2px; }
.cell { display: flex; align-items: center; gap: 3px; white-space: nowrap; }
.cell svg { width: 9px; height: 9px; }

/* dialog window */
.dialog { position: absolute; left: 333px; right: 11px; top: 110px; height: 388px; display: flex; flex-direction: column; padding: 0 5px 5px; background: #b4cdea; border: 1px solid #31495f; border-radius: 4px 4px 0 0; box-shadow: inset 1px 1px 0 #e5effa; }
.dlg-head { display: flex; align-items: center; gap: 4px; height: 21px; flex: none; margin: 0 -4px; padding: 3px 4px 0 6px; border-radius: 3px 3px 0 0; background: linear-gradient(#9ab5d5, #b4cdea); font-size: 10px; line-height: 14px; }
.close { display: grid; place-items: center; width: 26px; height: 15px; margin-left: auto; border: 1px solid #6b3028; border-radius: 1px; background: linear-gradient(#e8a595, #d0523b 50%, #c1442c 51%, #d9775c); box-shadow: 0 0 0 1px #d8e5f3; }
.close svg { width: 10px; height: 8px; }
.dlg-body { flex: 1; min-height: 0; display: flex; flex-direction: column; background: #f0eef1; }
.dlg-main { flex: 1; min-height: 0; display: flex; border-bottom: 1px solid #aaa9ac; }
.brand { width: 105px; flex: none; display: flex; flex-direction: column; justify-content: space-between; padding-top: 28px; background: #fff; }
.brand-art { width: 104px; height: 134px; }
.wordmark { display: flex; align-items: flex-start; height: 53px; color: #4a4a4a; font: 300 23px/24px Roboto, sans-serif; padding-left: 2px; }
.wordmark span { padding-top: 11px; }
.wordmark svg { width: 20px; height: 23px; margin-left: -2px; }
.choices { flex: 1; display: flex; flex-direction: column; padding: 8px 14px; }
.choices h2 { font: bold 10px/16px "DejaVu Sans Condensed", sans-serif; }
.choices p { margin: 6px 0 11px; }
.choices label { display: flex; align-items: center; height: 20px; white-space: pre; }
.choices input { appearance: none; width: 11px; height: 11px; margin: 0 2px; border: 1px solid #8f9296; border-radius: 50%; background: radial-gradient(#dcdcde, #fff); }
.choices input:checked { background: radial-gradient(circle at 45% 40%, #7fd0f5 0 1px, #0b3f78 3px, #fff 4px); }
.choices .hint { margin: auto 0 0; }
.dlg-foot { display: flex; justify-content: flex-end; align-items: center; gap: 2px; height: 29px; padding: 4px 5px 0 0; }
.dlg-foot button { width: 48px; height: 16px; border: 1px solid #83838a; border-radius: 2px; background: linear-gradient(#f6f6f6, #e8e8ea 50%, #d3d3d7 51%, #dedee1); }
.dlg-foot button:disabled { color: #8f8f93; border-color: #b9b9bd; background: #f3f2f4; }
.dlg-foot .go { border-color: #3f7fae; background: linear-gradient(#e6f4fd, #cbe8fa 50%, #a3d6f5 51%, #b4def7); box-shadow: inset 0 0 0 1px #7ec0ea; }
.dlg-foot .cancel { margin-left: 5px; }

/* tutorial callouts and mouse pointer */
.callout { position: absolute; }
.callout path { fill: #fff200; stroke: #0a0a0a; stroke-width: 3px; }
.callout text { font: 12px "Liberation Sans", sans-serif; text-anchor: middle; }
.a { left: 94px; top: 58px; width: 46px; height: 48px; }
.b { left: 574px; top: 173px; width: 50px; height: 42px; }
.c { left: 761px; top: 436px; width: 48px; height: 40px; }
.cursor { position: absolute; left: 782px; top: 483px; width: 8px; height: 12px; }
```
